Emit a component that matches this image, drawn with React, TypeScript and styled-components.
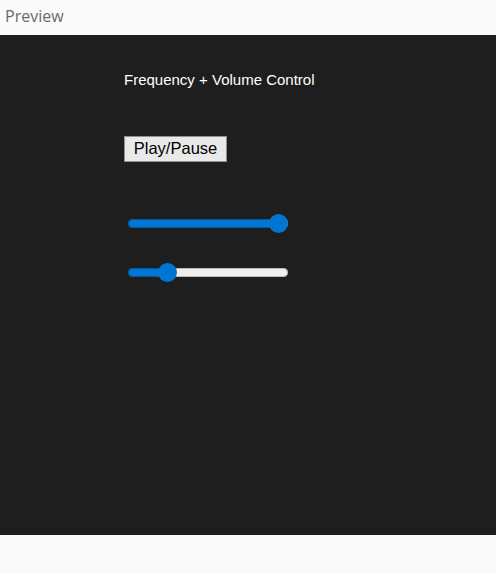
import { useState } from 'react'
import styled, { createGlobalStyle } from 'styled-components'

const GlobalStyle = createGlobalStyle`
  html, body {
    margin: 0;
    padding: 0;
    background: #fafafa;
  }
`

const Page = styled.div`
  width: 496px;
  height: 573px;
  display: flex;
  flex-direction: column;
  background: #fafafa;
`

const Header = styled.div`
  height: 35px;
  display: flex;
  align-items: center;
  padding: 0 0 3px 5px;
  font-family: 'Open Sans', sans-serif;
  font-size: 16px;
  color: #6a6a6a;
  box-sizing: border-box;
`

const Panel = styled.div`
  height: 500px;
  background: #1e1e1e;
  padding: 36px 0 0 124px;
  box-sizing: border-box;
  display: flex;
  flex-direction: column;
  align-items: flex-start;
  font-family: 'Liberation Sans', Arial, sans-serif;
`

const Title = styled.div`
  color: #ffffff;
  font-size: 15px;
  line-height: 18px;
`

const PlayButton = styled.button`
  margin-top: 47px;
  height: 26px;
  width: 103px;
  padding: 0 0 3px;
  font-family: 'Liberation Sans', Arial, sans-serif;
  font-size: 16.5px;
  line-height: 20px;
  color: #000;
  background: #e9e9e9;
  border: 1px solid #8f8f8f;
  border-radius: 0;
`

const Slider = styled.input<{ $top: number }>`
  -webkit-appearance: none;
  appearance: none;
  display: block;
  width: 160px;
  height: 20px;
  margin: ${p => p.$top}px 0 0 4px;
  padding: 0;
  background: transparent;

  &::-webkit-slider-runnable-track {
    height: 9px;
    border-radius: 5px;
    background: var(--fill);
    box-shadow: inset 0 0 0 1px rgba(0, 0, 0, 0.22);
  }

  &::-webkit-slider-thumb {
    -webkit-appearance: none;
    width: 19px;
    height: 19px;
    margin-top: -5px;
    border-radius: 50%;
    background: #0075d1;
    border: none;
  }
`

function Range({ value, top, onChange }: { value: number, top: number, onChange: (v: number) => void }) {
  // the thumb travels 141px of the 160px track, so fill to its centre
  const px = 9.5 + value * 1.41
  const fill = `linear-gradient(to right, #0075d1 0, #0075d1 ${px}px, #efefef ${px}px, #efefef 100%)`
  return (
    <Slider
      type="range"
      min={0}
      max={100}
      value={value}
      $top={top}
      onChange={e => onChange(Number(e.target.value))}
      style={{ ['--fill' as string]: fill }}
    />
  )
}

export default function App() {
  const [frequency, setFrequency] = useState(100)
  const [volume, setVolume] = useState(21)

  return (
    <Page>
      <GlobalStyle />
      <Header>Preview</Header>
      <Panel>
        <Title>Frequency + Volume Control</Title>
        <PlayButton>Play/Pause</PlayButton>
        <Range value={frequency} top={51} onChange={setFrequency} />
        <Range value={volume} top={29} onChange={setVolume} />
      </Panel>
    </Page>
  )
}
